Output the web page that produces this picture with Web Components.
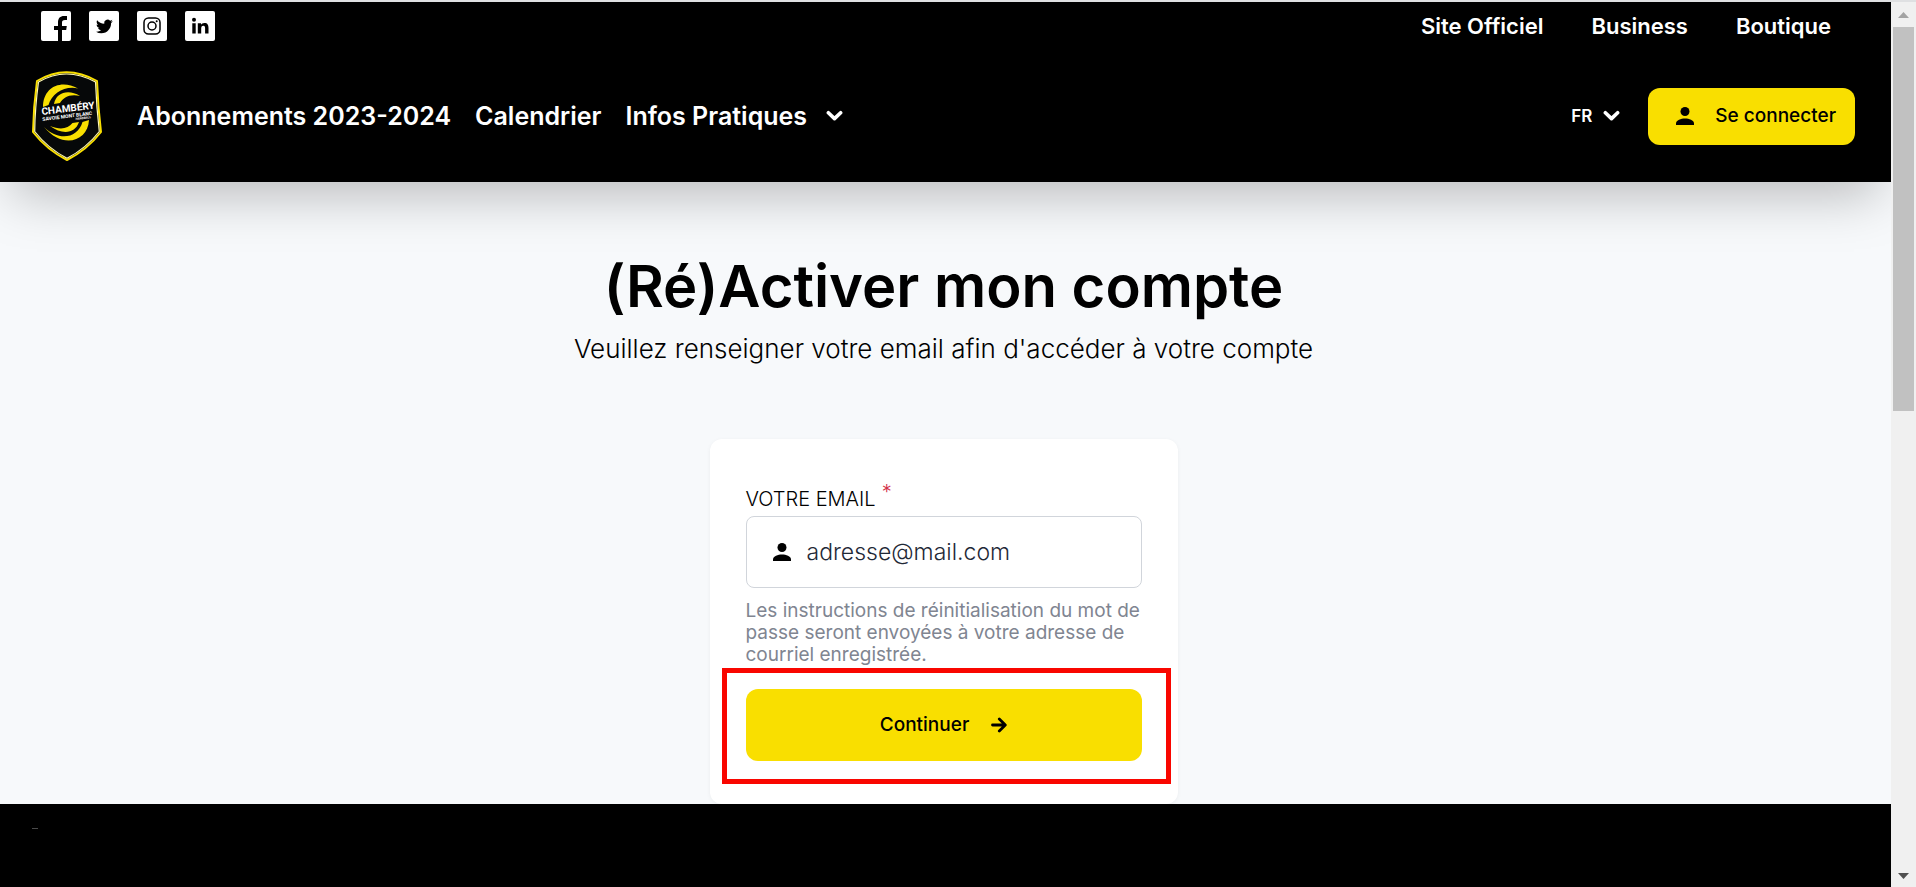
<!DOCTYPE html>
<html lang="fr">
<head>
<meta charset="utf-8">
<meta name="viewport" content="width=device-width, initial-scale=1">
<title>(Ré)Activer mon compte</title>
<style>
  html, body { height: 100%; }
  body {
    margin: 0;
    overflow: hidden;
    background: #f7f9fb;
    color: #000;
    font-family: Inter, "Open Sans", sans-serif;
  }
</style>
</head>
<body>

<ticket-page>
  <site-header slot="header">
    <social-link slot="social" icon="facebook" label="Facebook"></social-link>
    <social-link slot="social" icon="twitter" label="Twitter"></social-link>
    <social-link slot="social" icon="instagram" label="Instagram"></social-link>
    <social-link slot="social" icon="linkedin" label="LinkedIn"></social-link>
    <nav-link slot="links">Site Officiel</nav-link>
    <nav-link slot="links">Business</nav-link>
    <nav-link slot="links">Boutique</nav-link>
    <nav-link slot="menu">Abonnements 2023-2024</nav-link>
    <nav-link slot="menu">Calendrier</nav-link>
    <nav-link slot="menu" dropdown>Infos Pratiques</nav-link>
    <lang-select slot="account"></lang-select>
    <action-button slot="account" icon="user" compact>Se connecter</action-button>
  </site-header>

  <page-title>
    (Ré)Activer mon compte
    <span slot="subtitle">Veuillez renseigner votre email afin d'accéder à votre compte</span>
  </page-title>

  <form-card>
    <email-field label="VOTRE EMAIL" placeholder="adresse@mail.com">
      Les instructions de réinitialisation du mot de passe seront envoyées à votre adresse de courriel enregistrée.
    </email-field>
    <focus-frame>
      <action-button icon="arrow">Continuer</action-button>
    </focus-frame>
  </form-card>

  <site-footer slot="footer"></site-footer>
</ticket-page>

<script>
// one place for all the small glyphs
const ICONS = {
  facebook: `<svg viewBox="0 0 30 30" width="30" height="30"><path d="M17 30V19h-4v-4h4v-3.500c0-4.400 2.300-6.500 6-6.500h3v4h-2c-2.400 0-3 1-3 2.800V15h4.800l-.6 4H21v11z"/></svg>`,
  twitter: `<svg viewBox="0 0 30 30" width="30" height="30"><g transform="translate(7 7) scale(.7)"><path d="M23.950 4.570a10 10 0 0 1-2.820.77 4.960 4.960 0 0 0 2.160-2.720c-.95.560-2 .96-3.130 1.180a4.920 4.920 0 0 0-8.380 4.480C7.690 8.100 4.070 6.130 1.640 3.160a4.820 4.820 0 0 0-.67 2.480c0 1.710.87 3.210 2.190 4.100a4.900 4.900 0 0 1-2.230-.62v.06a4.920 4.920 0 0 0 3.950 4.830 5 5 0 0 1-2.210.08 4.940 4.940 0 0 0 4.600 3.420A9.870 9.870 0 0 1 0 19.540a13.990 13.990 0 0 0 7.550 2.210c9.050 0 14-7.500 14-13.980l-.02-.64a9.940 9.940 0 0 0 2.420-2.560z"/></g></svg>`,
  instagram: `<svg viewBox="0 0 30 30" width="30" height="30" fill="none" stroke="#000" stroke-width="1.500"><rect x="7" y="7" width="16" height="16" rx="4.500"/><circle cx="15" cy="15" r="4"/><circle cx="19.700" cy="10.300" r="1" fill="#000" stroke="none"/></svg>`,
  linkedin: `<svg viewBox="0 0 30 30" width="30" height="30"><circle cx="9" cy="8.800" r="2"/><path d="M7.300 12.200h3.400V22.500H7.300zM12.800 12.200H16v1.500c.6-1.100 1.800-1.800 3.400-1.800 3.300 0 4.100 2.100 4.100 5v5.600h-3.400v-5c0-1.300-.1-2.800-1.700-2.800-1.800 0-2.200 1.400-2.200 2.800v5h-3.400z"/></svg>`,
  user: `<svg viewBox="0 0 20 20" width="20" height="20"><circle cx="10" cy="5.500" r="4.500"/><path d="M1 19v-1.800C1 14 6 12.400 10 12.400s9 1.600 9 4.800V19z"/></svg>`,
  arrow: `<svg viewBox="0 0 16 16" width="16" height="16" fill="none" stroke="currentColor" stroke-width="2.800" stroke-linecap="round" stroke-linejoin="round"><path d="M1.500 8h12.500M8.300 2l6 6-6 6"/></svg>`,
  chevron: `<svg viewBox="0 0 18 12" width="17" height="12" fill="none" stroke="currentColor" stroke-width="3.800" stroke-linecap="round" stroke-linejoin="round"><path d="M2.500 2.500L9 8.800l6.500-6.300"/></svg>`
};

// small base: subclasses only give their markup
class BaseElement extends HTMLElement {
  connectedCallback() {
    if (this.shadowRoot) return;
    this.attachShadow({ mode: "open" }).innerHTML = this.render();
  }
}

customElements.define("ticket-page", class extends BaseElement {
  render() {
    return `
      <style>
        :host { display: grid; grid-template: 2px 1fr / 1fr auto; height: 100vh; }
        .edge { grid-column: 1 / -1; background: #dfe0e2; }
        .page { display: flex; flex-direction: column; min-width: 0; overflow: hidden; }
        main { padding: 72px 28px 0 24px; display: flex; flex-direction: column; align-items: center; }
        ::slotted(site-footer) { flex: 1; }
      </style>
      <div class="edge"></div>
      <div class="page">
        <slot name="header"></slot>
        <main><slot></slot></main>
        <slot name="footer"></slot>
      </div>
      <scroll-rail></scroll-rail>`;
  }
});

customElements.define("site-header", class extends BaseElement {
  render() {
    return `
      <style>
        :host {
          display: block;
          position: relative;
          background: #000;
          color: #fff;
          box-shadow: 0 25px 50px -12px rgba(0, 0, 0, .25);
        }
        .top { display: flex; justify-content: space-between; align-items: center; height: 48px; padding: 0 60px 0 41px; font-size: 22px; }
        .main { display: flex; align-items: center; height: 132px; padding: 0 36px 0 32px; box-sizing: border-box; }
        .social { display: flex; gap: 18px; }
        .links { display: flex; gap: 48px; }
        nav.menu { display: flex; gap: 24px; margin-left: 35px; font-size: 25px; }
        .account { display: flex; align-items: center; gap: 28px; margin-left: auto; }
      </style>
      <div class="top">
        <div class="social"><slot name="social"></slot></div>
        <nav class="links"><slot name="links"></slot></nav>
      </div>
      <div class="main">
        <club-logo></club-logo>
        <nav class="menu"><slot name="menu"></slot></nav>
        <div class="account"><slot name="account"></slot></div>
      </div>`;
  }
});

customElements.define("social-link", class extends BaseElement {
  render() {
    return `
      <style>
        :host { display: block; }
        a { display: block; width: 30px; height: 30px; background: #fff; border-radius: 2px; }
        svg { display: block; }
      </style>
      <a href="#" aria-label="${this.getAttribute("label")}">${ICONS[this.getAttribute("icon")]}</a>`;
  }
});

customElements.define("nav-link", class extends BaseElement {
  render() {
    const dropdown = this.hasAttribute("dropdown");
    return `
      <style>
        :host { display: block; }
        a, button {
          display: flex; align-items: center; gap: 19px;
          margin: 0; padding: 0; border: 0; background: none;
          font: inherit; font-weight: 600; line-height: 32px;
          color: inherit; text-decoration: none; white-space: nowrap;
        }
      </style>
      ${dropdown
        ? `<button type="button" aria-haspopup="true"><slot></slot>${ICONS.chevron}</button>`
        : `<a href="#"><slot></slot></a>`}`;
  }
});

customElements.define("club-logo", class extends BaseElement {
  render() {
    return `
      <style>:host, svg { display: block; flex: none; }</style>
      <svg viewBox="0 0 70 90" width="70" height="90" role="img" aria-label="Chambéry Savoie Mont Blanc">
        <path d="M5 10Q34-7.500 65 10Q66 36 69 61Q55 79 35 89Q15 79 1 61Q1.500 36 5 10z" fill="#060809" stroke="#f9df00" stroke-width="2"/>
        <path d="M6.500 11Q34-5 63.500 11Q64.500 37 67.300 60.500Q54 77.500 35 87.200Q16 77.500 2.700 60.500Q3 37 6.500 11z" fill="none" stroke="#fff8b0" stroke-width="1.200"/>
        <g fill="#f9df00">
          <path d="M11 36C11 16 29 8 46 17.500C33 14.500 20 22 16.500 34z"/>
          <path d="M22 33C24 21 37 18 48 25C38 22.500 31 26.500 28 32z"/>
          <path d="M57 49C56 70 31 79 12 56C27 71 46 67 50.500 51z"/>
          <path d="M47 51C43 63 30 64 18 55C28 59 36 58 40.500 52z"/>
        </g>
        <g fill="#fff" font-family="Roboto, sans-serif" font-weight="700" transform="rotate(-7 10 45)">
          <text x="10" y="44" font-size="10">CHAMBÉRY</text>
          <text x="10" y="50" font-size="5">SAVOIE MONT BLANC</text>
          <text x="43" y="53" font-size="3">HANDBALL</text>
        </g>
      </svg>`;
  }
});

customElements.define("lang-select", class extends BaseElement {
  render() {
    return `
      <style>
        :host { display: flex; align-items: center; gap: 10px; }
        select {
          appearance: none; margin: 0; padding: 0; border: 0; background: none;
          color: #fff; font: 600 17px/24px Inter, sans-serif;
        }
        option { color: #000; }
      </style>
      <select aria-label="Langue"><option>FR</option></select>${ICONS.chevron}`;
  }
});

customElements.define("action-button", class extends BaseElement {
  render() {
    const svg = ICONS[this.getAttribute("icon")];
    const compact = this.hasAttribute("compact");
    return `
      <style>
        :host { display: block; }
        button {
          display: flex; align-items: center; justify-content: center; gap: 22px;
          width: 100%; height: 72px; margin: 0; padding: 0 20px;
          border: 0; border-radius: 12px; background: #f9df00; color: #000;
          font: inherit; font-size: 19px; font-weight: 500; line-height: 24px; white-space: nowrap;
        }
        :host([compact]) button { height: 57px; gap: 20px; padding: 0 19px 0 27px; }
        svg { flex: none; }
      </style>
      <button type="button">${compact ? svg : ""}<slot></slot>${compact ? "" : svg}</button>`;
  }
});

customElements.define("page-title", class extends BaseElement {
  render() {
    return `
      <style>
        :host { display: block; text-align: center; }
        h1 { margin: 0; font-size: 58px; font-weight: 600; line-height: 64px; }
        p { margin: 13px 0 0; font-size: 26px; font-weight: 300; line-height: 36px; }
      </style>
      <h1><slot></slot></h1>
      <p><slot name="subtitle"></slot></p>`;
  }
});

customElements.define("form-card", class extends BaseElement {
  render() {
    return `
      <style>
        :host {
          display: block; box-sizing: border-box;
          width: 100%; max-width: 468px; margin-top: 72px; padding: 43px 36px;
          border-radius: 12px; background: #fff; box-shadow: 0 1px 4px rgba(0, 0, 0, .05);
        }
      </style>
      <form><slot></slot></form>`;
  }
});

customElements.define("email-field", class extends BaseElement {
  render() {
    return `
      <style>
        :host { display: block; }
        label { display: flex; gap: 6px; font-size: 20px; font-weight: 300; line-height: 34px; }
        .required { color: #d3324a; line-height: 20px; }
        .box {
          display: flex; align-items: center; gap: 15px; box-sizing: border-box;
          height: 72px; padding: 0 25px; border: 1px solid #d1d5db; border-radius: 8px;
        }
        .box svg { flex: none; }
        input {
          flex: 1; min-width: 0; padding: 0; border: 0; outline: 0; background: none;
          font: inherit; font-size: 23px; font-weight: 300; line-height: 32px; color: #1f2937;
        }
        input::placeholder { color: #1f2937; opacity: 1; }
        p { margin: 12px 0 0; font-size: 19px; line-height: 22px; color: #808591; }
      </style>
      <label for="email">${this.getAttribute("label")}<span class="required">*</span></label>
      <div class="box">
        ${ICONS.user}
        <input id="email" type="email" required aria-describedby="hint" placeholder="${this.getAttribute("placeholder")}">
      </div>
      <p id="hint"><slot></slot></p>`;
  }
});

// red rectangle drawn around its content
customElements.define("focus-frame", class extends BaseElement {
  render() {
    return `
      <style>
        :host { display: block; position: relative; margin-top: 23px; }
        .frame { position: absolute; inset: -21px -29px -23px -24px; border: 5px solid #f90600; pointer-events: none; }
      </style>
      <slot></slot>
      <div class="frame"></div>`;
  }
});

customElements.define("site-footer", class extends BaseElement {
  render() {
    return `
      <style>
        :host { display: block; position: relative; background: #000; padding: 24px 32px; }
        hr { width: 6px; height: 1px; margin: 0; border: 0; background: #4a4a4a; }
      </style>
      <hr>`;
  }
});

customElements.define("scroll-rail", class extends BaseElement {
  render() {
    return `
      <style>
        :host { display: flex; flex-direction: column; align-items: center; width: 25px; background: #f0f0f0; }
        .track { flex: 1; width: 21px; }
        .thumb { height: 46%; background: #c1c1c1; }
        svg { flex: none; display: block; }
      </style>
      <svg viewBox="0 0 25 25" width="25" height="25"><path d="M7 16h11l-5.500-6z" fill="#a3a3a3"/></svg>
      <div class="track"><div class="thumb"></div></div>
      <svg viewBox="0 0 25 25" width="25" height="25"><path d="M7 11h11l-5.500 6z" fill="#505050"/></svg>`;
  }
});
</script>
</body>
</html>
